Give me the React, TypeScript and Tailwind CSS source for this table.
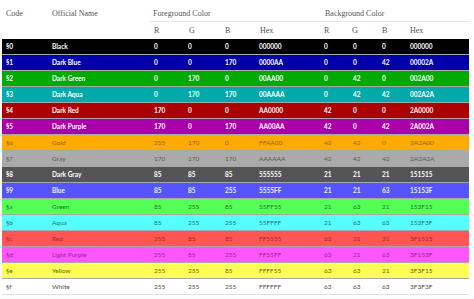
import React from "react";

type Row = {
  code: string;
  name: string;
  fg: [string, string, string, string];
  bg: [string, string, string, string];
  rowBg: string;
  text: string;
  bold: boolean;
};

const rows: Row[] = [
  { code: "§0", name: "Black", fg: ["0", "0", "0", "000000"], bg: ["0", "0", "0", "000000"], rowBg: "bg-[#000000]", text: "text-white", bold: true },
  { code: "§1", name: "Dark Blue", fg: ["0", "0", "170", "0000AA"], bg: ["0", "0", "42", "00002A"], rowBg: "bg-[#0000aa]", text: "text-white", bold: true },
  { code: "§2", name: "Dark Green", fg: ["0", "170", "0", "00AA00"], bg: ["0", "42", "0", "002A00"], rowBg: "bg-[#00aa00]", text: "text-white", bold: true },
  { code: "§3", name: "Dark Aqua", fg: ["0", "170", "170", "00AAAA"], bg: ["0", "42", "42", "002A2A"], rowBg: "bg-[#00aaaa]", text: "text-white", bold: true },
  { code: "§4", name: "Dark Red", fg: ["170", "0", "0", "AA0000"], bg: ["42", "0", "0", "2A0000"], rowBg: "bg-[#aa0000]", text: "text-white", bold: true },
  { code: "§5", name: "Dark Purple", fg: ["170", "0", "170", "AA00AA"], bg: ["42", "0", "42", "2A002A"], rowBg: "bg-[#aa00aa]", text: "text-white", bold: true },
  { code: "§6", name: "Gold", fg: ["255", "170", "0", "FFAA00"], bg: ["42", "42", "0", "2A2A00"], rowBg: "bg-[#ffaa00]", text: "text-[#95601a]", bold: false },
  { code: "§7", name: "Gray", fg: ["170", "170", "170", "AAAAAA"], bg: ["42", "42", "42", "2A2A2A"], rowBg: "bg-[#aaaaaa]", text: "text-[#5a5a5a]", bold: false },
  { code: "§8", name: "Dark Gray", fg: ["85", "85", "85", "555555"], bg: ["21", "21", "21", "151515"], rowBg: "bg-[#555555]", text: "text-white", bold: true },
  { code: "§9", name: "Blue", fg: ["85", "85", "255", "5555FF"], bg: ["21", "21", "63", "15153F"], rowBg: "bg-[#5555ff]", text: "text-[#f0f0ff]", bold: true },
  { code: "§a", name: "Green", fg: ["85", "255", "85", "55FF55"], bg: ["21", "63", "21", "153F15"], rowBg: "bg-[#55ff55]", text: "text-[#1f7a1f]", bold: false },
  { code: "§b", name: "Aqua", fg: ["85", "255", "255", "55FFFF"], bg: ["21", "63", "63", "153F3F"], rowBg: "bg-[#55ffff]", text: "text-[#237272]", bold: false },
  { code: "§c", name: "Red", fg: ["255", "85", "85", "FF5555"], bg: ["63", "21", "21", "3F1515"], rowBg: "bg-[#ff5555]", text: "text-[#a02a2a]", bold: false },
  { code: "§d", name: "Light Purple", fg: ["255", "85", "255", "FF55FF"], bg: ["63", "21", "63", "3F153F"], rowBg: "bg-[#ff55ff]", text: "text-[#922892]", bold: false },
  { code: "§e", name: "Yellow", fg: ["255", "255", "85", "FFFF55"], bg: ["63", "63", "21", "3F3F15"], rowBg: "bg-[#ffff55]", text: "text-[#68680e]", bold: false },
  { code: "§f", name: "White", fg: ["255", "255", "255", "FFFFFF"], bg: ["63", "63", "63", "3F3F3F"], rowBg: "bg-[#ffffff]", text: "text-[#4c4c4c]", bold: false },
];

const cols = "grid grid-cols-[46px_102px_34px_37px_34px_65px_29px_29px_28px_63px]";

export default function App() {
  return (
    <div className="w-[474px] h-[299px] overflow-hidden bg-white pl-[2px] pr-[5px]">
      <div className="font-['Liberation_Serif',serif] text-[8px] text-[#555]">
        <div className={`${cols} h-[22px]`}>
          <div className="pl-[4px] pt-[8px]">Code</div>
          <div className="pl-[4px] pt-[8px]">Official Name</div>
          <div className="col-span-4 pl-[3px] pt-[8px] border-b border-[#e6e6e6]">Foreground Color</div>
          <div className="col-span-4 pl-[5px] pt-[8px] border-b border-[#e6e6e6]">Background Color</div>
        </div>
        <div className={`${cols} h-[17px] items-center`}>
          <div />
          <div />
          <div className="pl-[4px]">R</div>
          <div className="pl-[5px]">G</div>
          <div className="pl-[4px]">B</div>
          <div className="pl-[5px]">Hex</div>
          <div className="pl-[4px]">R</div>
          <div className="pl-[3px]">G</div>
          <div className="pl-[4px]">B</div>
          <div className="pl-[4px]">Hex</div>
        </div>
      </div>
      <div className="font-['Lato',sans-serif] text-[6.5px]">
        {rows.map((r, i) => (
          <div
            key={r.code}
            className={`${cols} h-[16px] items-center border-b ${i === rows.length - 1 ? "border-[#e0e0e0]" : "border-[#a8a8a8]"} ${r.rowBg} ${r.text} ${r.bold ? "font-bold" : "font-normal"}`}
          >
            <div className="pl-[4px]">{r.code}</div>
            <div className="pl-[4px]">{r.name}</div>
            {r.fg.map((v, j) => (
              <div key={"f" + j} className="pl-[4px]">{v}</div>
            ))}
            {r.bg.map((v, j) => (
              <div key={"b" + j} className="pl-[4px]">{v}</div>
            ))}
          </div>
        ))}
      </div>
    </div>
  );
}
